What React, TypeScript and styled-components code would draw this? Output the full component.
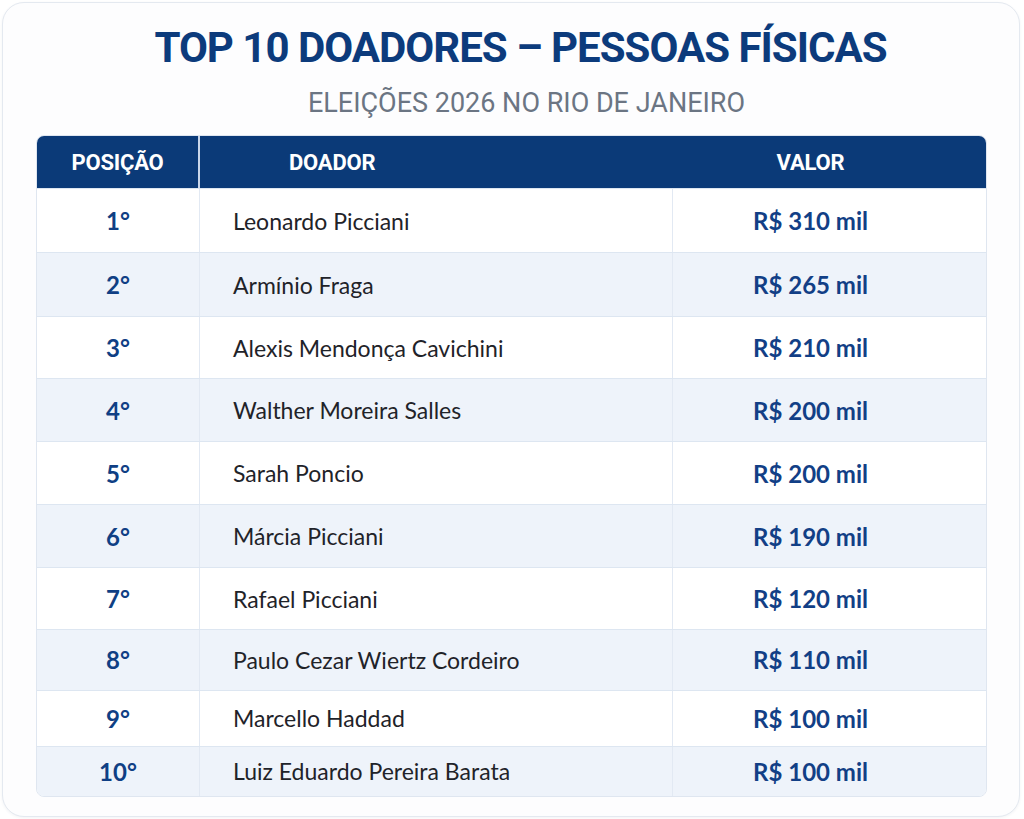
import React from "react";
import styled, { createGlobalStyle } from "styled-components";

const Global = createGlobalStyle`
  html, body { margin: 0; padding: 0; background: #ffffff; }
  body { font-family: "Lato", "Liberation Sans", sans-serif; }
`;

const Card = styled.div`
  box-sizing: border-box;
  margin: 2px 4px 2px 2px;
  height: 815px;
  border: 1px solid #e4e9f0;
  border-radius: 22px;
  background: #fdfdfe;
  box-shadow: 0 1px 3px rgba(30, 50, 90, 0.06);
  padding: 0 32px 19px 33px;
  display: flex;
  flex-direction: column;
`;

const Title = styled.h1`
  margin: 0;
  padding: 21px 0 0 18px;
  text-align: center;
  font-family: "Roboto", "Liberation Sans", sans-serif;
  font-weight: 700;
  font-size: 42px;
  line-height: 48px;
  letter-spacing: -1px;
  color: #0c3b7c;
`;

const Subtitle = styled.h2`
  margin: 0;
  padding: 16px 0 0 30px;
  text-align: center;
  font-family: "Roboto", "Liberation Sans", sans-serif;
  font-weight: 400;
  font-size: 27px;
  line-height: 30px;
  color: #6b7583;
`;

const Table = styled.div`
  margin-top: 17px;
  border: 1px solid #dfe6f0;
  border-radius: 8px;
  overflow: hidden;
  display: flex;
  flex-direction: column;
`;

const cols = "163px 473px 1fr";

const HeaderRow = styled.div`
  display: grid;
  grid-template-columns: ${cols};
  height: 53px;
  background: #0b3a78;
`;

const HeadCell = styled.div<{ $pad?: string; $padRight?: string; $divider?: boolean }>`
  display: flex;
  align-items: center;
  justify-content: ${(p) => (p.$pad ? "flex-start" : "center")};
  padding-left: ${(p) => p.$pad || "0"};
  padding-right: ${(p) => p.$padRight || "0"};
  color: #ffffff;
  font-family: "Roboto", "Liberation Sans", sans-serif;
  font-weight: 700;
  font-size: 22px;
  letter-spacing: -0.2px;
  border-right: ${(p) => (p.$divider ? "2px solid #c9d6ea" : "none")};
`;

const Row = styled.div<{ $alt: boolean; $h: number }>`
  display: grid;
  grid-template-columns: ${cols};
  height: ${(p) => p.$h}px;
  background: ${(p) => (p.$alt ? "#eef3fa" : "#ffffff")};
  border-top: 1px solid #dde6f1;
`;

const Cell = styled.div<{ $divider?: boolean }>`
  display: flex;
  align-items: center;
  border-right: ${(p) => (p.$divider ? "1px solid #e2e9f3" : "none")};
`;

const Pos = styled(Cell)`
  justify-content: center;
  font-family: "Lato", "Liberation Sans", sans-serif;
  font-weight: 700;
  font-size: 24px;
  color: #0f3f84;
`;

const Name = styled(Cell)`
  padding-left: 33px;
  font-family: "Lato", "Liberation Sans", sans-serif;
  font-weight: 400;
  font-size: 23px;
  color: #1f2329;
`;

const Value = styled(Cell)`
  justify-content: center;
  padding-right: 38px;
  font-family: "Lato", "Liberation Sans", sans-serif;
  font-weight: 700;
  font-size: 24px;
  color: #123f86;
`;

const data: [string, string, number][] = [
  ["Leonardo Picciani", "R$ 310 mil", 64],
  ["Armínio Fraga", "R$ 265 mil", 64],
  ["Alexis Mendonça Cavichini", "R$ 210 mil", 62],
  ["Walther Moreira Salles", "R$ 200 mil", 63],
  ["Sarah Poncio", "R$ 200 mil", 63],
  ["Márcia Picciani", "R$ 190 mil", 63],
  ["Rafael Picciani", "R$ 120 mil", 61],
  ["Paulo Cezar Wiertz Cordeiro", "R$ 110 mil", 61],
  ["Marcello Haddad", "R$ 100 mil", 56],
  ["Luiz Eduardo Pereira Barata", "R$ 100 mil", 50],
];

export default function App() {
  return (
    <>
      <Global />
      <Card>
        <Title>TOP 10 DOADORES – PESSOAS FÍSICAS</Title>
        <Subtitle>ELEIÇÕES 2026 NO RIO DE JANEIRO</Subtitle>
        <Table>
          <HeaderRow>
            <HeadCell $divider>POSIÇÃO</HeadCell>
            <HeadCell $pad="89px">DOADOR</HeadCell>
            <HeadCell $padRight="38px">VALOR</HeadCell>
          </HeaderRow>
          {data.map(([name, value, h], i) => (
            <Row key={name} $alt={i % 2 === 1} $h={h}>
              <Pos $divider>{i + 1}°</Pos>
              <Name $divider>{name}</Name>
              <Value>{value}</Value>
            </Row>
          ))}
        </Table>
      </Card>
    </>
  );
}
